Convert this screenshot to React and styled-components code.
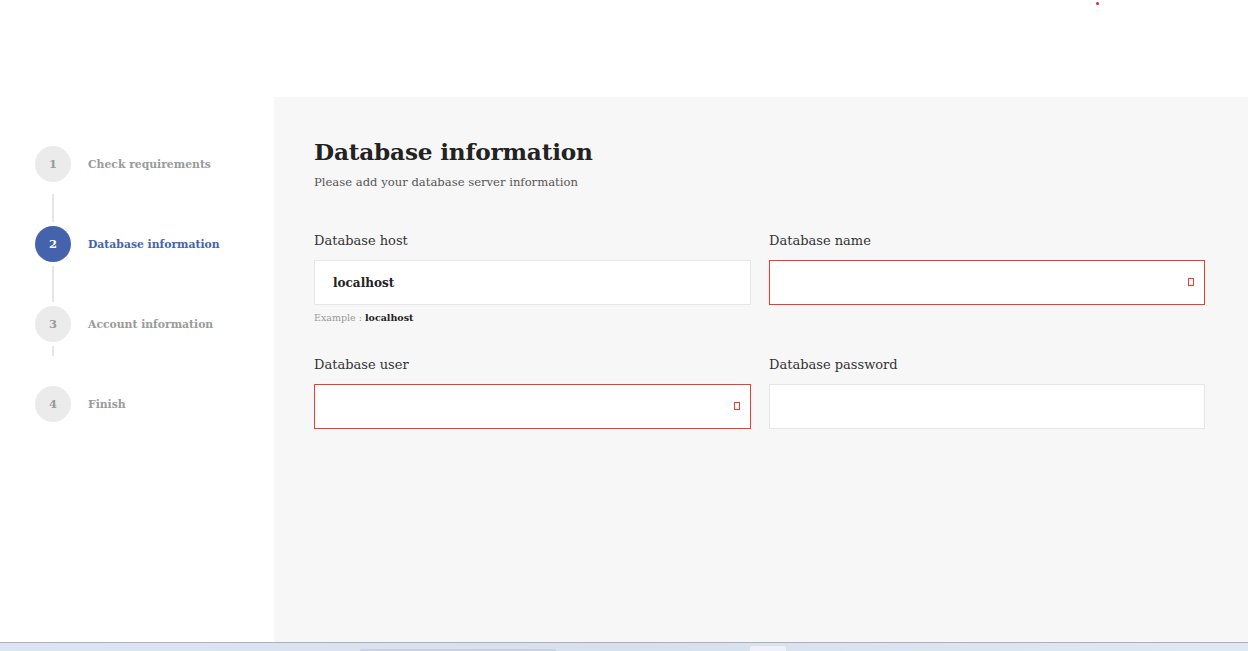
import React from "react";
import styled, { createGlobalStyle } from "styled-components";

const Global = createGlobalStyle`
  html, body { margin: 0; padding: 0; background: #fff; }
  body { font-family: "DejaVu Serif", "Liberation Serif", serif; }
  * { box-sizing: border-box; }
`;

const Page = styled.div`
  width: 1248px;
  height: 651px;
  display: flex;
  flex-direction: column;
  overflow: hidden;
`;

const TopBar = styled.div`
  height: 97px;
  background: #fff;
  position: relative;
`;

const Dot = styled.span`
  position: absolute;
  left: 1096px;
  top: 2px;
  width: 3px;
  height: 3px;
  border-radius: 50%;
  background: #e8202a;
`;

const Body = styled.div`
  flex: 1;
  display: flex;
`;

const Sidebar = styled.nav`
  width: 274px;
  background: #fff;
  padding: 49px 0 0 35px;
  display: flex;
  flex-direction: column;
`;

const StepRow = styled.div`
  display: flex;
  align-items: center;
  gap: 17px;
  height: 36px;
`;

const Circle = styled.div`
  width: 36px;
  height: 36px;
  border-radius: 50%;
  display: flex;
  align-items: center;
  justify-content: center;
  background: ${p => (p.$active ? "#4563ac" : "#ebebeb")};
  color: ${p => (p.$active ? "#fff" : "#9a9a9a")};
  font-size: 11.5px;
  font-weight: bold;
`;

const StepLabel = styled.span`
  font-size: 10.8px;
  font-weight: bold;
  color: ${p => (p.$active ? "#4563ac" : "#9a9a9a")};
`;

const Gap = styled.div`
  height: 44px;
  padding-top: ${p => p.$offset}px;
  padding-left: 17px;
`;

const Line = styled.div`
  width: 2px;
  height: ${p => p.$len}px;
  background: #e6e6e6;
`;

const Main = styled.main`
  flex: 1;
  background: #f7f7f7;
  padding: 39px 43px 0 40px;
`;

const Title = styled.h1`
  margin: 0;
  font-size: 23.2px;
  line-height: 32px;
  font-weight: bold;
  color: #222;
  letter-spacing: -0.2px;
`;

const Subtitle = styled.p`
  margin: 6px 0 0;
  font-size: 11.6px;
  line-height: 16px;
  color: #555;
`;

const Grid = styled.div`
  margin-top: 43px;
  display: grid;
  grid-template-columns: 437px 436px;
  column-gap: 18px;
`;

const Field = styled.div`
  display: flex;
  flex-direction: column;
  height: 124px;
`;

const Label = styled.label`
  font-size: 13px;
  line-height: 16px;
  color: #333;
  margin-bottom: 11px;
`;

const InputBox = styled.div`
  height: 45px;
  background: #fff;
  border: 1px solid ${p => (p.$error ? "#f5392b" : "#e6e6e6")};
  display: flex;
  align-items: center;
  justify-content: space-between;
  padding: 0 10px 0 18px;
  font-size: 12px;
  font-weight: bold;
  color: #222;
`;

const ErrorMark = styled.span`
  width: 6px;
  height: 8px;
  border: 1px solid #f5392b;
  margin-top: -2px;
`;

const Hint = styled.div`
  margin-top: 7px;
  font-size: 9.5px;
  color: #9a9a9a;
  b { color: #222; }
`;

const Taskbar = styled.div`
  height: 9px;
  border-top: 1px solid #aab1bc;
  background: linear-gradient(90deg, #dce5f1 0%, #d8e0ee 50%, #e0e8f3 100%);
  display: flex;
  align-items: flex-end;
`;

const TaskSeg = styled.div`
  margin-left: ${p => p.$left}px;
  width: ${p => p.$w}px;
  height: ${p => p.$h}px;
  background: ${p => p.$bg};
  border-radius: 3px 3px 0 0;
`;

const steps = [
  { n: 1, label: "Check requirements" },
  { n: 2, label: "Database information", active: true },
  { n: 3, label: "Account information" },
  { n: 4, label: "Finish" },
];
const gaps = [
  { offset: 12, len: 28 },
  { offset: 4, len: 36 },
  { offset: 4, len: 10 },
];

function Input({ value, error }) {
  return (
    <InputBox $error={error}>
      <span>{value}</span>
      {error && <ErrorMark />}
    </InputBox>
  );
}

export default function App() {
  return (
    <Page>
      <Global />
      <TopBar>
        <Dot />
      </TopBar>
      <Body>
        <Sidebar>
          {steps.map((s, i) => (
            <React.Fragment key={s.n}>
              <StepRow>
                <Circle $active={s.active}>{s.n}</Circle>
                <StepLabel $active={s.active}>{s.label}</StepLabel>
              </StepRow>
              {gaps[i] && (
                <Gap $offset={gaps[i].offset}>
                  <Line $len={gaps[i].len} />
                </Gap>
              )}
            </React.Fragment>
          ))}
        </Sidebar>
        <Main>
          <Title>Database information</Title>
          <Subtitle>Please add your database server information</Subtitle>
          <Grid>
            <Field>
              <Label>Database host</Label>
              <Input value="localhost" />
              <Hint>
                Example : <b>localhost</b>
              </Hint>
            </Field>
            <Field>
              <Label>Database name</Label>
              <Input error />
            </Field>
            <Field>
              <Label>Database user</Label>
              <Input error />
            </Field>
            <Field>
              <Label>Database password</Label>
              <Input />
            </Field>
          </Grid>
        </Main>
      </Body>
      <Taskbar>
        <TaskSeg $left={360} $w={196} $h={2} $bg="#c9d2e2" />
        <TaskSeg $left={194} $w={36} $h={5} $bg="#eef2f8" />
      </Taskbar>
    </Page>
  );
}
